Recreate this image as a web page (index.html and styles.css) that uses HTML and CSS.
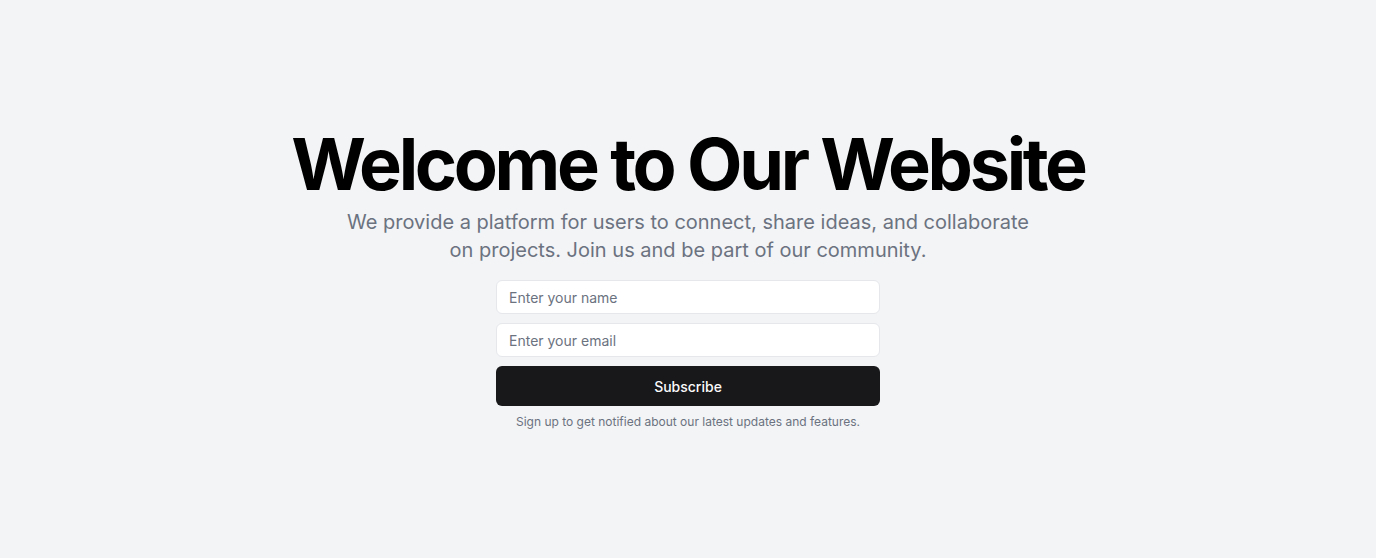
FILE: index.html
```html
<!DOCTYPE html>
<html lang="en">
<head>
<meta charset="utf-8">
<title>Welcome</title>
<link rel="stylesheet" href="styles.css">
</head>
<body>
<main class="hero">
  <div class="intro">
    <h1 class="title">Welcome to Our Website</h1>
    <p class="lead">We provide a platform for users to connect, share ideas, and collaborate on projects. Join us and be part of our community.</p>
  </div>
  <div class="signup">
    <form class="form">
      <input class="field" type="text" placeholder="Enter your name">
      <input class="field" type="email" placeholder="Enter your email">
      <button class="btn" type="submit">Subscribe</button>
    </form>
    <p class="note">Sign up to get notified about our latest updates and features.</p>
  </div>
</main>
</body>
</html>
```

FILE: styles.css
```css
* { box-sizing: border-box; }
html, body { margin: 0; padding: 0; }
body {
  background: #f3f4f6;
  font-family: Inter, "Noto Sans", sans-serif;
  color: #000;
}
.hero {
  min-height: 558px;
  display: flex;
  flex-direction: column;
  align-items: center;
  justify-content: center;
  gap: 16px;
  padding: 0 16px;
  text-align: center;
}
.intro {
  display: flex;
  flex-direction: column;
  align-items: center;
  gap: 8px;
}
.title {
  margin: 0;
  font-size: 72px;
  line-height: 1;
  font-weight: 700;
  letter-spacing: -3.35px;
}
.lead {
  margin: 0;
  max-width: 700px;
  font-size: 20px;
  line-height: 28px;
  color: #6b7280;
}
.signup {
  width: 384px;
  display: flex;
  flex-direction: column;
  gap: 8px;
}
.form {
  display: flex;
  flex-direction: column;
  gap: 9px;
}
.field {
  height: 34px;
  width: 100%;
  border: 1px solid #e5e7eb;
  border-radius: 6px;
  background: #fff;
  padding: 0 12px;
  font-family: inherit;
  font-size: 14px;
  color: #111;
  outline: none;
}
.field::placeholder { color: #6b7280; }
.btn {
  height: 40px;
  width: 100%;
  border: none;
  border-radius: 6px;
  background: #18181b;
  color: #fafafa;
  font-family: inherit;
  font-size: 14px;
  font-weight: 500;
}
.note {
  margin: 0;
  font-size: 12px;
  line-height: 16px;
  color: #6b7280;
}
```
